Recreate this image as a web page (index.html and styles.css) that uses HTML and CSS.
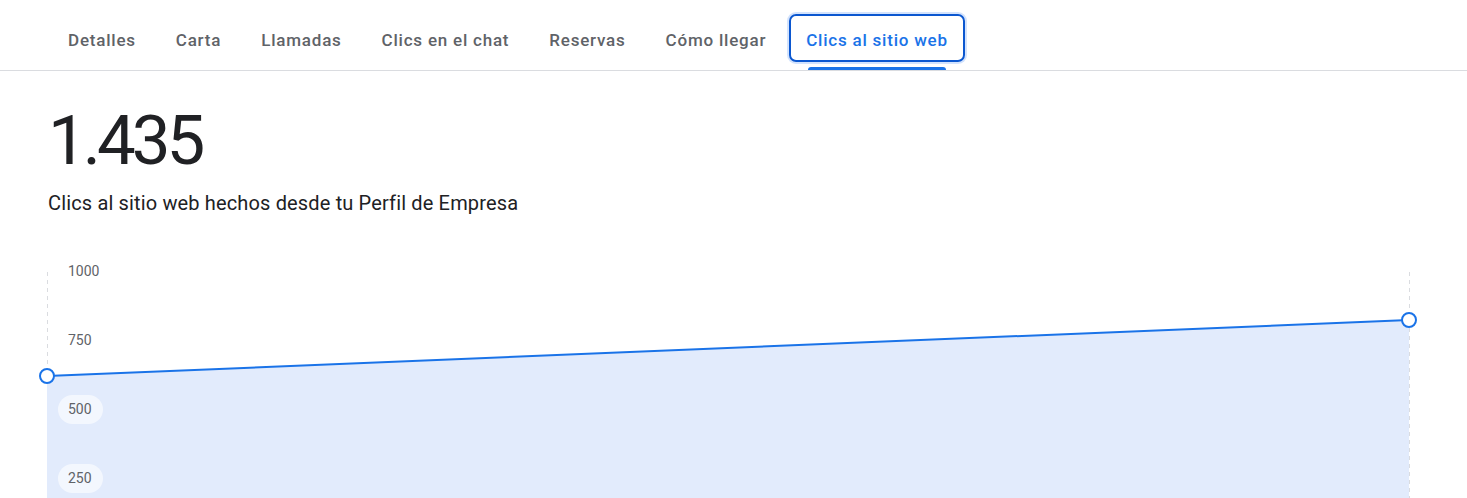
FILE: index.html
```html
<!DOCTYPE html>
<html lang="es">
<head>
    <meta charset="UTF-8">
    <meta name="viewport" content="width=device-width, initial-scale=1.0">
    <title>Clics al sitio web</title>
    <link rel="stylesheet" href="styles.css">
</head>
<body>
    <nav class="tabs">
        <div class="tab">Detalles</div>
        <div class="tab">Carta</div>
        <div class="tab">Llamadas</div>
        <div class="tab">Clics en el chat</div>
        <div class="tab">Reservas</div>
        <div class="tab">Cómo llegar</div>
        <div class="tab active">Clics al sitio web</div>
    </nav>

    <main class="content">
        <div class="total">1.435</div>
        <p class="caption">Clics al sitio web hechos desde tu Perfil de Empresa</p>
    </main>

    <div class="chart">
        <svg class="plot" width="1467" height="238" viewBox="0 0 1467 238">
            <line class="grid" x1="47.5" y1="12" x2="47.5" y2="238"></line>
            <line class="grid" x1="1409.5" y1="12" x2="1409.5" y2="238"></line>
            <polygon class="area" points="47,116 1409,60 1409,238 47,238"></polygon>
            <line class="trend" x1="47" y1="116" x2="1409" y2="60"></line>
            <circle class="point" cx="47" cy="116" r="7"></circle>
            <circle class="point" cx="1409" cy="60" r="7"></circle>
        </svg>
        <div class="axis">
            <span class="tick">1000</span>
            <span class="tick">750</span>
            <span class="tick">500</span>
            <span class="tick">250</span>
        </div>
    </div>
</body>
</html>
```

FILE: styles.css
```css
body {
    margin: 0;
    font-family: Roboto, "Liberation Sans", sans-serif;
    background: #fff;
    color: #202124;
    overflow: hidden;
}

.tabs {
    display: flex;
    align-items: flex-end;
    height: 71px;
    box-sizing: border-box;
    padding: 0 0 8px 48px;
    border-bottom: 1px solid #dadce0;
}

.tab {
    position: relative;
    height: 48px;
    padding: 4px 20px 0;
    line-height: 44px;
    box-sizing: border-box;
    font-size: 17px;
    font-weight: 500;
    letter-spacing: 0.78px;
    color: #5f6368;
}

.tab.active {
    color: #1a73e8;
}

/* focus ring around the selected tab */
.tab.active::before {
    content: "";
    position: absolute;
    top: 0;
    bottom: 0;
    left: 3px;
    right: 3px;
    border: 2px solid #0b57d0;
    border-radius: 7px;
    box-shadow: 0 0 0 2px #d3e3fd;
}

.tab.active::after {
    content: "";
    position: absolute;
    left: 22px;
    right: 22px;
    bottom: -8px;
    height: 3px;
    border-radius: 3px 3px 0 0;
    background: #1a73e8;
}

.content {
    padding: 30px 48px 0;
}

.total {
    font-size: 69px;
    line-height: 80px;
    font-weight: 400;
    letter-spacing: -4px;
    color: #202124;
}

.caption {
    margin: 10px 0 0;
    font-size: 20px;
    line-height: 24px;
    letter-spacing: 0.15px;
    color: #202124;
}

.chart {
    position: relative;
    margin-top: 45px;
    height: 238px;
}

.plot {
    display: block;
}

.grid {
    stroke: #dadce0;
    stroke-width: 1;
    stroke-dasharray: 4 4;
}

.area {
    fill: #e2ebfc;
}

.trend {
    stroke: #1a73e8;
    stroke-width: 2;
}

.point {
    fill: #fff;
    stroke: #1a73e8;
    stroke-width: 2;
}

.axis {
    position: absolute;
    left: 58px;
    top: -3px;
    display: flex;
    flex-direction: column;
    align-items: flex-start;
    gap: 40px;
}

.tick {
    display: block;
    height: 29px;
    line-height: 29px;
    padding: 0 11px 0 10px;
    border-radius: 15px;
    font-size: 14px;
    color: #5f6368;
    background: rgba(255, 255, 255, 0.6);
}
```
